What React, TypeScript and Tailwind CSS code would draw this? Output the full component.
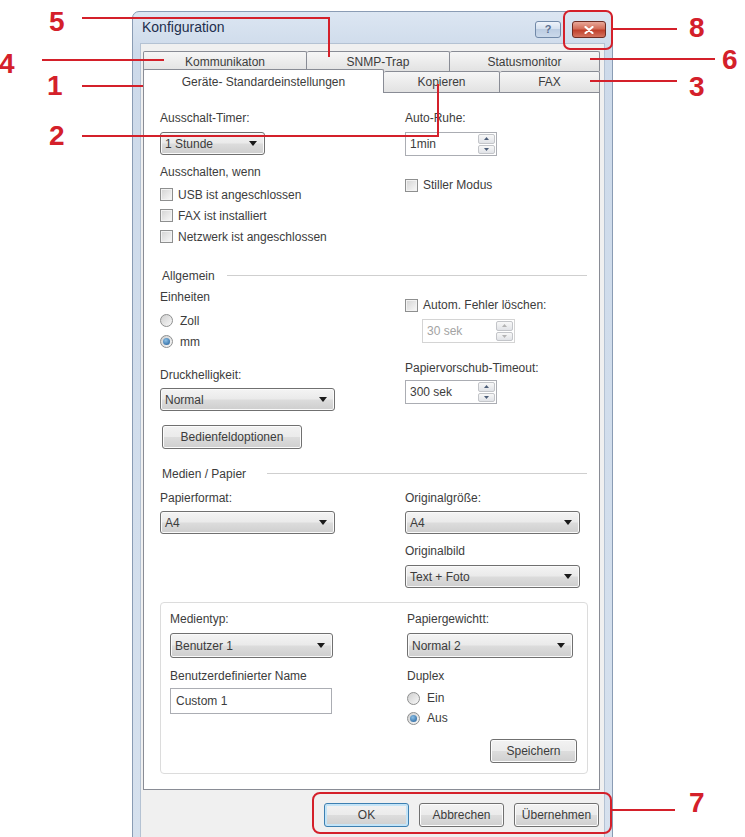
import type { ReactNode } from "react";

function DownArrow() {
  return (
    <svg width="8" height="5" viewBox="0 0 8 5" className="shrink-0">
      <path d="M0 0h8L4 5z" fill="#1a1a1a" />
    </svg>
  );
}

function Combo({ value, className }: { value: string; className: string }) {
  return (
    <div
      className={`flex items-center justify-between rounded-[3px] border border-[#707070] bg-[linear-gradient(#f4f4f4,#eaeaea_48%,#dcdcdc_52%,#cecece)] pl-[4px] pr-[7px] shadow-[inset_0_0_0_1px_#fafafa] ${className}`}
    >
      <span>{value}</span>
      <DownArrow />
    </div>
  );
}

function SpinBtn({ up, dim }: { up?: boolean; dim?: boolean }) {
  return (
    <div className="flex flex-1 items-center justify-center rounded-[2px] border border-[#c3c5c9] bg-[linear-gradient(#f8f8f8,#e1e3e7)]">
      <svg width="5" height="3" viewBox="0 0 5 3">
        <path
          d={up ? "M0 3h5L2.5 0z" : "M0 0h5L2.5 3z"}
          fill={dim ? "#b4b4b4" : "#4d5e78"}
        />
      </svg>
    </div>
  );
}

function Spin({
  value,
  className,
  dim,
}: {
  value: string;
  className: string;
  dim?: boolean;
}) {
  return (
    <div
      className={`flex h-[24px] border bg-white ${
        dim ? "border-[#d4d4d4] text-[#a3a3a3]" : "border-[#abadb3]"
      } ${className}`}
    >
      <span className="flex flex-1 items-center pl-[4px]">{value}</span>
      <div className="flex w-[19px] flex-col gap-px p-px">
        <SpinBtn up dim={dim} />
        <SpinBtn dim={dim} />
      </div>
    </div>
  );
}

function Check({ label, className = "" }: { label: string; className?: string }) {
  return (
    <div className={`flex items-center gap-[5px] ${className}`}>
      <span className="h-[13px] w-[13px] shrink-0 border border-[#8e8f8f] bg-[linear-gradient(135deg,#d3d3d3,#f9f9f9)] shadow-[inset_0_0_0_1px_#f2f2f2]" />
      <span>{label}</span>
    </div>
  );
}

function Radio({ label, on, className }: { label: string; on?: boolean; className: string }) {
  return (
    <div className={`flex items-center gap-[7px] ${className}`}>
      <span className="flex h-[13px] w-[13px] shrink-0 items-center justify-center rounded-full border border-[#8e8f8f] bg-[linear-gradient(135deg,#cfcfcf,#f8f8f8)]">
        {on && (
          <span className="h-[7px] w-[7px] rounded-full bg-[radial-gradient(circle_at_40%_35%,#8cc0e6,#1d5a96)]" />
        )}
      </span>
      <span>{label}</span>
    </div>
  );
}

function Btn({
  children,
  className,
  primary,
}: {
  children: ReactNode;
  className: string;
  primary?: boolean;
}) {
  return (
    <div
      className={`flex h-[24px] items-center justify-center rounded-[3px] border bg-[linear-gradient(#f2f2f2,#ebebeb_50%,#dddddd_50%,#cfcfcf)] ${
        primary
          ? "border-[#3c7fb1] shadow-[inset_0_0_0_2px_#c4e4f7]"
          : "border-[#707070] shadow-[inset_0_0_0_1px_#fcfcfc]"
      } ${className}`}
    >
      {children}
    </div>
  );
}

function Label({ children, className = "" }: { children: ReactNode; className?: string }) {
  return <div className={`h-[16px] leading-[16px] ${className}`}>{children}</div>;
}

function Heading({ title, gap }: { title: string; gap: string }) {
  return (
    <div className="flex h-[16px] items-center leading-[16px]">
      <span className="pl-[2px]">{title}</span>
      <span className={`h-[2px] flex-1 border-t border-b border-t-[#cfcfcf] border-b-white ${gap}`} />
    </div>
  );
}

const tab =
  "flex items-center justify-center border-t border-r border-[#898c95] rounded-t-[2px] bg-[linear-gradient(#f6f6f6,#e2e2e2)]";

export default function App() {
  return (
    <div className="relative h-[837px] w-[745px] overflow-hidden bg-white font-['Liberation_Sans',Arial,sans-serif] text-[12px] text-[#3c3c3c]">
      {/* dialog window */}
      <div className="ml-[132px] mt-[11px] h-[840px] w-[481px] rounded-t-[7px] border border-[#8a9cb4] bg-[linear-gradient(#dce6f2,#cddaea_40px,#d6e1ee)]">
        <div className="flex h-[31px] justify-between">
          <div className="pl-[9px] pt-[7px] text-[14px] leading-[17px] text-[#1e2f4d]">
            Konfiguration
          </div>
          <div className="flex gap-[11px] pr-[6px] pt-[9px]">
            <div className="flex h-[17px] w-[26px] items-center justify-center rounded-[3px] border border-[#7189a8] bg-[linear-gradient(#eef3fa,#d3dfee_50%,#bccde2_50%,#cbd9ea)] text-[11px] font-bold leading-none text-[#5a6f8f]">
              ?
            </div>
            <div className="flex h-[17px] w-[34px] items-center justify-center rounded-[3px] border border-[#6e2c22] bg-[linear-gradient(#e8a899,#d36d58_45%,#c0402b_55%,#d5735f)]">
              <svg width="10" height="8" viewBox="0 0 10 8">
                <path d="M1.5 1l7 6M8.5 1l-7 6" stroke="#fff" strokeWidth="2.2" strokeLinecap="round" />
              </svg>
            </div>
          </div>
        </div>

        <div className="mx-[7px] h-[820px] border border-[#b4c2d3] bg-[#f0f0f0] pl-[2px] pr-[4px] pt-[7px]">
          {/* back tab row */}
          <div className="flex h-[20px]">
            <div className={`${tab} w-[164px] border-l`}>Kommunikaton</div>
            <div className={`${tab} w-[143px]`}>SNMP-Trap</div>
            <div className={`${tab} w-[150px]`}>Statusmonitor</div>
          </div>
          {/* front tab row */}
          <div className="flex h-[21px] items-end">
            <div className="relative z-10 -mb-px flex h-[24px] w-[241px] items-center justify-center rounded-t-[2px] border border-b-0 border-[#898c95] bg-white">
              Geräte- Standardeinstellungen
            </div>
            <div className={`${tab} h-[21px] w-[116px]`}>Kopieren</div>
            <div className={`${tab} h-[21px] w-[100px]`}>FAX</div>
          </div>

          {/* page */}
          <div className="h-[698px] border border-[#898c95] bg-white pl-[16px] pr-[12px] pt-[17px]">
            <div className="grid grid-cols-[245px_1fr]">
              <div className="flex flex-col">
                <Label>Ausschalt-Timer:</Label>
                <Combo value="1 Stunde" className="mt-[6px] h-[23px] w-[105px]" />
                <Label className="mt-[9px]">Ausschalten, wenn</Label>
                <Check label="USB ist angeschlossen" className="mt-[4px] h-[21px]" />
                <Check label="FAX ist installiert" className="h-[21px]" />
                <Check label="Netzwerk ist angeschlossen" className="h-[21px]" />
              </div>
              <div className="flex flex-col items-start">
                <Label>Auto-Ruhe:</Label>
                <Spin value="1min" className="mt-[6px] w-[92px]" />
                <Check label="Stiller Modus" className="mt-[21px] h-[16px]" />
              </div>
            </div>

            <div className="mt-[21px]">
              <Heading title="Allgemein" gap="ml-[12px]" />
            </div>
            <div className="grid grid-cols-[245px_1fr]">
              <div className="flex flex-col items-start">
                <Label className="mt-[5px]">Einheiten</Label>
                <Radio label="Zoll" className="mt-[5px] h-[21px]" />
                <Radio label="mm" on className="h-[21px]" />
                <Label className="mt-[15px]">Druckhelligkeit:</Label>
                <Combo value="Normal" className="mt-[5px] h-[23px] w-[175px]" />
                <Btn className="ml-[2px] mt-[14px] w-[140px]">Bedienfeldoptionen</Btn>
              </div>
              <div className="flex flex-col items-start">
                <Check label="Autom. Fehler löschen:" className="mt-[13px] h-[16px]" />
                <Spin value="30 sek" dim className="ml-[17px] mt-[6px] w-[93px]" />
                <Label className="mt-[17px]">Papiervorschub-Timeout:</Label>
                <Spin value="300 sek" className="mt-[4px] w-[92px]" />
              </div>
            </div>

            <div className="mt-[17px]">
              <Heading title="Medien / Papier" gap="ml-[21px]" />
            </div>
            <div className="grid grid-cols-[245px_1fr]">
              <div className="flex flex-col">
                <Label className="mt-[8px]">Papierformat:</Label>
                <Combo value="A4" className="mt-[5px] h-[23px] w-[175px]" />
              </div>
              <div className="flex flex-col">
                <Label className="mt-[8px]">Originalgröße:</Label>
                <Combo value="A4" className="mt-[5px] h-[23px] w-[175px]" />
                <Label className="mt-[9px]">Originalbild</Label>
                <Combo value="Text + Foto" className="mt-[6px] h-[23px] w-[175px]" />
              </div>
            </div>

            <div className="mt-[14px] w-[428px] rounded-[4px] border border-[#dcdcdc] pb-[10px] pl-[9px] pr-[10px] pt-[8px]">
              <div className="grid grid-cols-[237px_1fr]">
                <div className="flex flex-col">
                  <Label>Medientyp:</Label>
                  <Combo value="Benutzer 1" className="mt-[6px] h-[25px] w-[163px]" />
                  <Label className="mt-[10px]">Benutzerdefinierter Name</Label>
                  <div className="mt-[4px] flex h-[26px] w-[162px] items-center border border-[#abadb3] pl-[5px]">
                    Custom 1
                  </div>
                </div>
                <div className="flex flex-col">
                  <Label>Papiergewichtt:</Label>
                  <Combo value="Normal 2" className="mt-[6px] h-[25px] w-[166px]" />
                  <Label className="mt-[10px]">Duplex</Label>
                  <Radio label="Ein" className="mt-[4px] h-[20px]" />
                  <Radio label="Aus" on className="h-[20px]" />
                  <Btn className="mt-[11px] w-[87px] self-end">Speichern</Btn>
                </div>
              </div>
            </div>
          </div>

          {/* dialog buttons */}
          <div className="mt-[13px] flex justify-end gap-[10px] pr-px">
            <Btn primary className="w-[85px]">OK</Btn>
            <Btn className="w-[85px]">Abbrechen</Btn>
            <Btn className="w-[85px]">Übernehmen</Btn>
          </div>
        </div>
      </div>

      {/* callouts */}
      <div className="absolute left-[563px] top-[10px] h-[40px] w-[50px] rounded-[7px] border-2 border-[#d4202a]" />
      <div className="absolute left-[312px] top-[792px] h-[42px] w-[300px] rounded-[8px] border-2 border-[#d4202a]" />

      <div className="absolute left-[82px] top-[17px] h-[2px] w-[248px] bg-[#d4202a]" />
      <div className="absolute left-[328px] top-[17px] h-[40px] w-[2px] bg-[#d4202a]" />
      <div className="absolute left-[42px] top-[59px] h-[2px] w-[122px] bg-[#d4202a]" />
      <div className="absolute left-[82px] top-[85px] h-[2px] w-[83px] bg-[#d4202a]" />
      <div className="absolute left-[82px] top-[135px] h-[2px] w-[357px] bg-[#d4202a]" />
      <div className="absolute left-[437px] top-[84px] h-[53px] w-[2px] bg-[#d4202a]" />
      <div className="absolute left-[613px] top-[28px] h-[2px] w-[64px] bg-[#d4202a]" />
      <div className="absolute left-[590px] top-[58px] h-[2px] w-[125px] bg-[#d4202a]" />
      <div className="absolute left-[590px] top-[80px] h-[2px] w-[87px] bg-[#d4202a]" />
      <div className="absolute left-[612px] top-[809px] h-[2px] w-[63px] bg-[#d4202a]" />

      <div className="absolute left-[49px] top-[8px] text-[28px] font-bold leading-[28px] text-[#d4202a]">5</div>
      <div className="absolute left-[-1px] top-[50px] text-[28px] font-bold leading-[28px] text-[#d4202a]">4</div>
      <div className="absolute left-[47px] top-[72px] text-[28px] font-bold leading-[28px] text-[#d4202a]">1</div>
      <div className="absolute left-[49px] top-[122px] text-[28px] font-bold leading-[28px] text-[#d4202a]">2</div>
      <div className="absolute left-[689px] top-[14px] text-[28px] font-bold leading-[28px] text-[#d4202a]">8</div>
      <div className="absolute left-[722px] top-[46px] text-[28px] font-bold leading-[28px] text-[#d4202a]">6</div>
      <div className="absolute left-[689px] top-[73px] text-[28px] font-bold leading-[28px] text-[#d4202a]">3</div>
      <div className="absolute left-[689px] top-[789px] text-[28px] font-bold leading-[28px] text-[#d4202a]">7</div>
    </div>
  );
}
